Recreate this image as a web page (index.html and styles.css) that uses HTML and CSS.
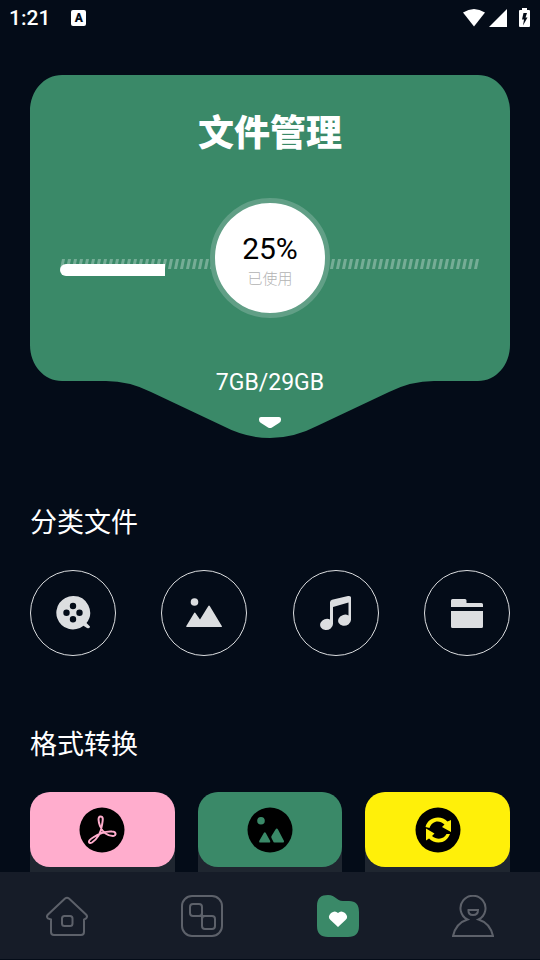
FILE: index.html
```html
<!DOCTYPE html>
<html lang="zh-CN">
<head>
<meta charset="utf-8">
<meta name="viewport" content="width=device-width, initial-scale=1">
<title>文件管理</title>
<link rel="stylesheet" href="styles.css">
</head>
<body>
<header class="status">
  <span class="clock">1:21</span>
  <span class="keyboard">A</span>
  <span class="signals">
    <svg width="24" height="20" viewBox="0 0 24 20" aria-hidden="true"><path d="M1 4.500Q12-2.500 23 4.500L12 18.500Z"/></svg>
    <svg width="19" height="20" viewBox="0 0 19 20" aria-hidden="true"><path d="M0 19 18 1V19Z"/></svg>
    <svg class="battery" width="12" height="20" viewBox="0 0 12 20" aria-hidden="true"><path fill-rule="evenodd" d="M3 0h5v2h2q1 0 1 1v15q0 1-1 1H1q-1 0-1-1V3q0-1 1-1h2ZM4.500 5 3 11.500h2L4 17.500 8.500 9.500H6.500L8 5Z"/></svg>
  </span>
</header>

<main class="content">
  <section class="storage">
    <svg class="storage-shape" viewBox="0 0 480 363" preserveAspectRatio="none" aria-hidden="true"><path d="M32 0H448C466 0 480 16 480 36V270C480 290 466 306 448 306H404Q381 306 359 317L287 351Q264 363 240 363T193 351L121 317Q99 306 76 306H32C14 306 0 290 0 270V36C0 16 14 0 32 0Z"/></svg>
    <h1 class="title">文件管理</h1>
    <div class="meter">
      <svg class="meter-track" aria-hidden="true">
        <defs><pattern id="ticks" width="6" height="10" patternUnits="userSpaceOnUse"><path d="M2 0H5L3 10H0Z"/></pattern></defs>
        <rect width="100%" height="10" fill="url(#ticks)"/>
      </svg>
      <div class="meter-fill" style="width:25%"></div>
      <div class="dial">
        <strong class="percent">25%</strong>
        <span class="used">已使用</span>
      </div>
    </div>
    <p class="capacity">7GB/29GB</p>
    <svg class="chevron" width="22" height="11" viewBox="0 0 22 11" aria-hidden="true"><path d="M2 0H20Q22 0 22 2V3Q22 5 20 6L13 10.500Q11 11.500 9 10.500L2 6Q0 5 0 3V2Q0 0 2 0Z"/></svg>
  </section>

  <section class="group">
    <h2 class="heading">分类文件</h2>
    <div class="categories">
      <button class="category" type="button" aria-label="视频">
        <svg width="36" height="36" viewBox="0 0 36 36"><path fill-rule="evenodd" d="M18 1a16.700 16.700 0 1 0 10.500 29.700L32 33Q35 34 35 31.500L31.500 28A16.700 16.700 0 0 0 18 1ZM18 7.800a3.200 3.200 0 1 1 0 6.400a3.200 3.200 0 0 1 0-6.400ZM11.500 14.500a3.200 3.200 0 1 1 0 6.400a3.200 3.200 0 0 1 0-6.400ZM24.500 14.500a3.200 3.200 0 1 1 0 6.400a3.200 3.200 0 0 1 0-6.400ZM18 21a3.200 3.200 0 1 1 0 6.400a3.200 3.200 0 0 1 0-6.400Z"/></svg>
      </button>
      <button class="category" type="button" aria-label="图片">
        <svg width="36" height="36" viewBox="0 0 36 36"><circle cx="8.500" cy="7" r="3.800"/><path d="M.3 31 8 18.200Q8.800 17 9.600 18.200L14 24.500 22.200 11.200Q23 10 23.900 11.200L35.800 31Q36.300 32 35 32H1Q-.3 32 .3 31Z"/></svg>
      </button>
      <button class="category" type="button" aria-label="音乐">
        <svg width="36" height="36" viewBox="0 0 36 36"><path d="M12 7.500Q12 5.500 14 4.800L30 1Q33 .5 33 2.500V25A6.500 5.500-15 1 1 30.500 20.500V7.500L15 12V29A6.500 5.500-15 1 1 12 24.500Z"/></svg>
      </button>
      <button class="category" type="button" aria-label="文件">
        <svg width="36" height="36" viewBox="0 0 36 36"><path d="M2 12V5.500Q2 4 3.500 4H16Q17.500 4 17.500 5.500V8H32.500Q34 8 34 9.500V12ZM2 16H34V31.500Q34 33 32.500 33H3.500Q2 33 2 31.500Z"/></svg>
      </button>
    </div>
  </section>

  <section class="group">
    <h2 class="heading">格式转换</h2>
    <div class="formats">
      <div class="format"><button class="format-top pink" type="button" aria-label="PDF转换">
        <svg width="46" height="46" viewBox="0 0 46 46"><circle cx="23" cy="23" r="22.500"/><path class="line" d="M21.500 9.500C18.500 9.500 19.500 15 21 19C23.500 25.500 29 29 34 29C38 28.500 37 24.500 33 24.500C27 24 20 26.500 14 30.500C8 34 9.500 37.500 13 35.500C18 32 22 26 23 18C24 12.500 24.500 9.500 21.500 9.500Z"/></svg>
      </button></div>
      <div class="format"><button class="format-top green" type="button" aria-label="图片转换">
        <svg width="46" height="46" viewBox="0 0 46 46"><circle cx="23" cy="23" r="22.500"/><path class="ink" d="M14 10a3.800 3.800 0 1 1 0 7.600a3.800 3.800 0 0 1 0-7.600ZM12.200 34 16.800 26Q17.800 24.500 18.800 26L23.200 34Q23.500 35.500 22.500 35.500H13Q11.800 35.500 12.200 34ZM24.500 29 28.500 22.500Q29.800 20.500 31 22.500L37 34Q37.200 35.500 36 35.500H27.500Q26.500 35.500 26 34L24.500 31Q24 30 24.500 29Z"/></svg>
      </button></div>
      <div class="format"><button class="format-top yellow" type="button" aria-label="格式互转">
        <svg width="46" height="46" viewBox="0 0 46 46"><circle cx="23" cy="23" r="22.500"/><path class="ink" d="M10.500 20C12 14 17 10.500 23 10.500Q28.500 10.500 32.500 14.500L36 13V25L27 20 29.500 17.500C24 12.500 17 14 14.500 21ZM35 27C33 32 29 35.500 23.500 35.500Q18 35.500 14 31.500L11 33.500V21.500L19.500 26.500 17 29C22.500 33.500 29 32 31.500 27Z"/></svg>
      </button></div>
    </div>
  </section>
</main>

<nav class="tabs">
  <a class="tab" href="#home" aria-label="首页"><svg width="42" height="42" viewBox="0 0 42 42"><path d="M19 3.500Q21 2 23 3.500L40 19.500Q42 21.500 40 23.500L38 24.500V37Q38 40 35 40H8Q5 40 5 37V24.500L2 23.500Q0 21.500 2 19.500ZM18.500 21H24Q26.500 21 26.500 23.500V28.500Q26.500 31 24 31H18.500Q16 31 16 28.500V23.500Q16 21 18.500 21Z"/></svg></a>
  <a class="tab" href="#tools" aria-label="工具"><svg width="42" height="42" viewBox="0 0 42 42"><rect x="1" y="1" width="40" height="40" rx="10"/><rect x="9" y="9" width="12" height="12" rx="3"/><rect x="21" y="21" width="13" height="13" rx="3"/><path d="M18 21H24M21 18V24"/></svg></a>
  <a class="tab active" href="#files" aria-label="文件管理" aria-current="page"><svg width="42" height="42" viewBox="0 0 42 42"><path class="folder" d="M0 11C0 3 4 0 11 0C19 0 19 6 26 6H32Q42 6 42 17V31Q42 42 31 42H11Q0 42 0 31Z"/><path class="heart" d="M14 18Q18 15 21 18Q24 15 28 18Q32 22 28.500 25L21 32 13.500 25Q10 22 14 18Z"/></svg></a>
  <a class="tab" href="#me" aria-label="我的"><svg width="42" height="42" viewBox="0 0 42 42"><path d="M15.500 24.500A12.500 12.500 0 1 1 26.500 24.500Q38 28 41 41H1Q4 28 15.500 24.500ZM16.500 15H26Q26 20 21 20T16.500 15Z"/></svg></a>
</nav>
</body>
</html>
```
FILE: styles.css
```css
* { box-sizing: border-box; }
html, body { height: 100%; }
body {
  margin: 0;
  display: flex;
  flex-direction: column;
  background: #040c18;
  color: #fff;
  font-family: Roboto, "Noto Sans CJK SC", sans-serif;
}
h1, h2, p { margin: 0; }
button { border: 0; padding: 0; font: inherit; color: inherit; cursor: pointer; }
svg { display: block; flex: none; fill: currentColor; }

.status {
  flex: none;
  display: flex;
  align-items: center;
  height: 36px;
  padding: 0 9px;
}
.clock { font-size: 21px; line-height: 38px; font-weight: 500; }
.keyboard {
  width: 15px;
  height: 16px;
  margin-left: 21px;
  border-radius: 2px;
  background: #fff;
  color: #040c18;
  font-size: 12px;
  line-height: 16px;
  font-weight: 900;
  text-align: center;
}
.signals { display: flex; gap: 3px; margin-left: auto; }
.battery { margin-left: 8px; }

.content { flex: 1; min-height: 0; overflow: hidden; padding: 39px 30px 0; }

.storage {
  position: relative;
  display: flex;
  flex-direction: column;
  align-items: center;
  padding: 33px 30px 10px;
}
.storage-shape {
  position: absolute;
  inset: 0;
  z-index: -1;
  width: 100%;
  height: 100%;
  color: #3a8968;
}
.title { font-size: 36px; line-height: 52px; font-weight: 900; }
.meter {
  position: relative;
  width: 100%;
  height: 120px;
  margin-top: 38px;
  padding-top: 61px;
}
.meter-track { width: 100%; height: 10px; color: rgba(255, 255, 255, .3); }
.meter-fill {
  height: 12px;
  margin-top: -5px;
  border-radius: 6px 0 0 6px;
  background: #fff;
}
.dial {
  position: absolute;
  inset: 0;
  display: flex;
  flex-direction: column;
  align-items: center;
  width: 120px;
  height: 120px;
  margin: 0 auto;
  padding-top: 28px;
  border: 5px solid #619f86;
  border-radius: 50%;
  background: #fff;
}
.percent { color: #000; font-size: 30px; line-height: 36px; font-weight: 400; }
.used { color: #b3b3b3; font-size: 15px; line-height: 24px; font-weight: 300; }
.capacity { margin-top: 51px; font-size: 23px; line-height: 28px; }
.chevron { margin-top: 20px; }

.group { padding-top: 65px; }
.group + .group { padding-top: 69px; }
.heading { font-size: 27px; line-height: 40px; font-weight: 400; }
.categories { display: flex; justify-content: space-between; margin-top: 27px; }
.category {
  display: grid;
  place-items: center;
  width: 86px;
  height: 86px;
  border: 1px solid #dcdee0;
  border-radius: 50%;
  background: none;
  color: #dcdee0;
}
.formats {
  display: grid;
  grid-template-columns: repeat(3, 1fr);
  gap: 23px;
  margin-top: 27px;
}
.format { height: 180px; border-radius: 22px; background: #1f2630; }
.format-top {
  display: grid;
  place-items: center;
  width: 100%;
  height: 75px;
  border-radius: 20px;
}
.format-top svg { color: #000; }
.pink { background: #ffadcd; --ink: #ffadcd; }
.green { background: #3a8968; --ink: #3a8968; }
.yellow { background: #fff009; --ink: #fff009; }
.ink { fill: var(--ink); }
.line { fill: none; stroke: var(--ink); stroke-width: 2; stroke-linejoin: round; }

.tabs {
  flex: none;
  display: flex;
  align-items: center;
  justify-content: space-between;
  height: 88px;
  padding: 0 46px;
  border-bottom: 1px solid #040c18;
  background: #161c28;
}
.tab { color: #5d616a; }
.tab svg { fill: none; stroke: currentColor; stroke-width: 2; }
.tab .folder { fill: #3a8968; stroke: none; }
.tab .heart { fill: #fff; stroke: none; }
```
